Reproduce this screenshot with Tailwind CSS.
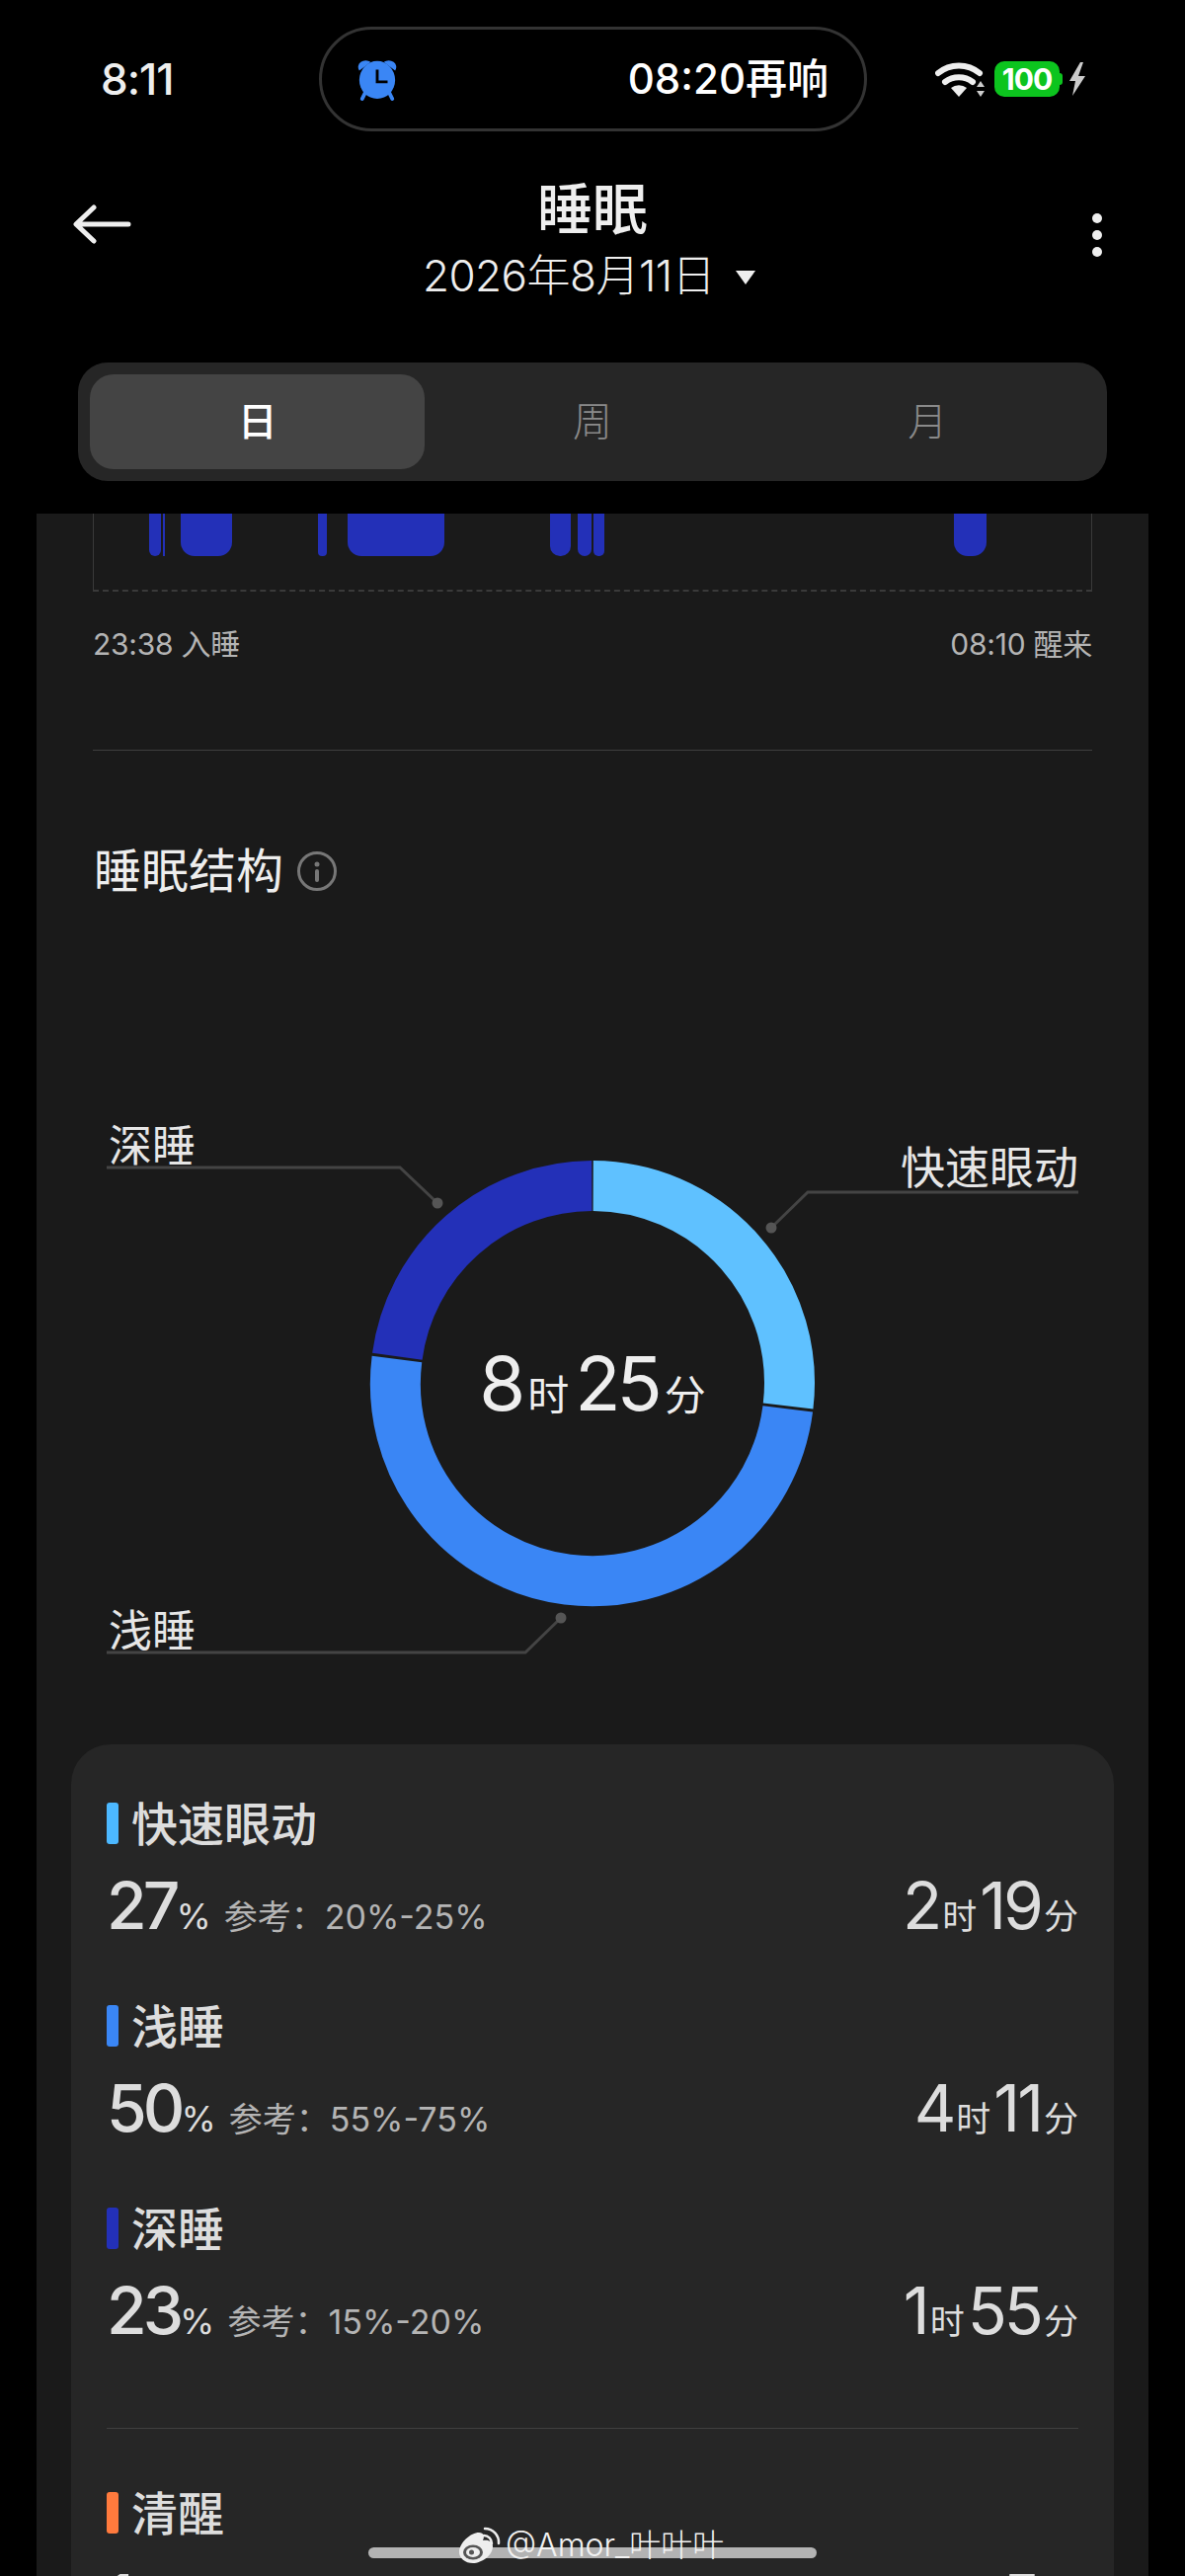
<!DOCTYPE html>
<html lang="zh-CN">
<head>
  <meta charset="UTF-8" />
  <meta name="viewport" content="width=device-width, initial-scale=1.0"/>
  <title>睡眠</title>
  <script src="https://cdn.jsdelivr.net/npm/@tailwindcss/browser@4"></script>
</head>
<body class="bg-black">
<div class="relative w-[1200px] h-[2608px] overflow-hidden bg-black font-['Inter','Noto_Sans_CJK_SC',sans-serif]">

  <!-- Header -->
  <header class="h-[520px] pt-[27px]">
    <!-- Status bar -->
    <div class="flex items-center h-[106px] pl-[102px]">
      <div class="w-[221px] text-[44px] leading-none font-medium tracking-[-1px] text-[#eeeeee]">8:11</div>
      <div class="flex items-center justify-between w-[555px] h-[106px] pl-[35px] pr-[36px] rounded-full border-[3px] border-[#333333]">
        <svg class="w-[42px] h-[46px]" viewBox="0 0 44 46">
          <ellipse cx="22" cy="24" rx="19" ry="20" fill="#3a86f5"/>
          <path d="M3 14a8 7 0 0 1 12-9z M41 14a8 7 0 0 0-12-9z" fill="#3a86f5"/>
          <path d="M10 36l-4 8M34 36l4 8" stroke="#3a86f5" stroke-width="4" stroke-linecap="round"/>
          <path d="M22 13v13h11" fill="none" stroke="#000" stroke-width="3"/>
        </svg>
        <div class="text-[42px] leading-none font-medium text-white">08:20再响</div>
      </div>
      <div class="flex items-center ml-[69px]">
        <svg class="w-[52px] h-[38px]" viewBox="0 0 52 38">
          <path d="M3 13a33 33 0 0 1 42 0M10 22a23 23 0 0 1 28 0" fill="none" stroke="#eeeeee" stroke-width="6" stroke-linecap="round"/>
          <path d="M16 28a13 13 0 0 1 16 0l-8 9z" fill="#eeeeee"/>
          <path d="M46 21l4 6h-8z M46 37l4-6h-8z" fill="#cccccc"/>
        </svg>
        <div class="flex items-center justify-center w-[66px] h-[36px] ml-[8px] rounded-[10px] bg-[#0cc41e] text-[30px] leading-none font-bold tracking-[-1px] text-white">100</div>
        <div class="w-[3px] h-[12px] rounded-r-full bg-[#0cc41e]"></div>
        <svg class="w-[18px] h-[34px] ml-[6px]" viewBox="0 0 18 34">
          <path d="M12 0L1 19h6L4 34l13-20h-7l5-14z" fill="#cccccc"/>
        </svg>
      </div>
    </div>

    <!-- Title row -->
    <div class="grid grid-cols-[1fr_auto_1fr] items-start h-[130px] mt-[47px] px-[73px]">
      <svg class="w-[60px] h-[40px] mt-[27px]" viewBox="0 0 60 40">
        <path d="M57 20H5M22 3L4 20l18 17" fill="none" stroke="#eeeeee" stroke-width="5" stroke-linecap="round" stroke-linejoin="round"/>
      </svg>
      <div class="flex flex-col items-center">
        <div class="text-[56px] leading-[64px] font-medium text-[#eeeeee]">睡眠</div>
        <div class="flex items-center mt-[9px] mr-[6px] text-[44px] leading-[52px] font-light tracking-[-0.5px] text-[#eeeeee]">
          2026年8月11日
          <svg class="w-[22px] h-[16px] ml-[20px] mt-[3px]" viewBox="0 0 22 16"><path d="M1 1h20l-10 14z" fill="#eeeeee"/></svg>
        </div>
      </div>
      <div class="flex flex-col gap-[7px] justify-self-end mt-[36px] mr-[11px]">
        <div class="w-[10px] h-[10px] rounded-full bg-[#eeeeee]"></div>
        <div class="w-[10px] h-[10px] rounded-full bg-[#eeeeee]"></div>
        <div class="w-[10px] h-[10px] rounded-full bg-[#eeeeee]"></div>
      </div>
    </div>

    <!-- Day / week / month tabs -->
    <div class="grid grid-cols-3 h-[120px] mx-[79px] mt-[57px] p-[12px] rounded-[30px] bg-[#262626]">
      <div class="flex items-center justify-center rounded-[24px] bg-[#444444] text-[40px] font-medium text-white">日</div>
      <div class="flex items-center justify-center text-[40px] font-light text-[#8a8a8a]">周</div>
      <div class="flex items-center justify-center text-[40px] font-light text-[#8a8a8a]">月</div>
    </div>
  </header>

  <!-- Scrolling panel -->
  <main class="w-[1126px] ml-[37px] bg-[#1a1a1a]">
    <div class="px-[57px]">
      <!-- Sleep stage strip -->
      <div class="relative h-[79px] border-x border-b-2 border-[#3a3a3a] border-b-[#3a3a3a] [border-bottom-style:dashed]">
        <div class="absolute top-0 left-[56px] w-[12px] h-[43px] rounded-b-[6px] bg-[#2330b8]"></div>
        <div class="absolute top-0 left-[70px] w-[2px] h-[43px] bg-[#2330b8]"></div>
        <div class="absolute top-0 left-[88px] w-[52px] h-[43px] rounded-b-[14px] bg-[#2330b8]"></div>
        <div class="absolute top-0 left-[227px] w-[9px] h-[43px] rounded-b-[4px] bg-[#2330b8]"></div>
        <div class="absolute top-0 left-[257px] w-[98px] h-[43px] rounded-b-[14px] bg-[#2330b8]"></div>
        <div class="absolute top-0 left-[462px] w-[21px] h-[43px] rounded-b-[10px] bg-[#2330b8]"></div>
        <div class="absolute top-0 left-[490px] w-[14px] h-[43px] rounded-b-[7px] bg-[#2330b8]"></div>
        <div class="absolute top-0 left-[506px] w-[11px] h-[43px] rounded-b-[5px] bg-[#2330b8]"></div>
        <div class="absolute top-0 left-[871px] w-[33px] h-[43px] rounded-b-[14px] bg-[#2330b8]"></div>
      </div>
      <div class="flex justify-between mt-[37px] text-[30px] leading-[32px] tracking-[-0.25px] text-[#b4b4b4]">
        <span>23:38 入睡</span>
        <span>08:10 醒来</span>
      </div>
      <div class="h-[1px] mt-[91px] bg-[#3f3f3f]"></div>

      <!-- Sleep structure heading -->
      <div class="flex items-center gap-[13px] mt-[95px] h-[54px] pl-[1px]">
        <h2 class="text-[48px] leading-none text-[#eeeeee]">睡眠结构</h2>
        <svg class="w-[42px] h-[42px]" viewBox="0 0 42 42">
          <circle cx="21" cy="21" r="18.5" fill="none" stroke="#777777" stroke-width="3"/>
          <circle cx="21" cy="14" r="2.5" fill="#777777"/>
          <path d="M21 21v9" stroke="#777777" stroke-width="4" stroke-linecap="round"/>
        </svg>
      </div>
    </div>

    <!-- Donut diagram -->
    <div class="relative h-[600px] mt-[191px]">
      <svg class="absolute top-0 left-0 w-[1126px] h-[600px]" viewBox="0 0 1126 600">
        <g fill="none" stroke-width="51">
          <path d="M563.7 100.5A199.5 199.5 0 0 1 761.1 323.6" stroke="#5fc1ff"/>
          <path d="M760.75 326.4A199.5 199.5 0 0 1 364.94 276.03" stroke="#3a86f5"/>
          <path d="M365.3 273.27A199.5 199.5 0 0 1 562.3 100.5" stroke="#2330b8"/>
        </g>
        <g fill="none" stroke="#444444" stroke-width="3">
          <path d="M71 82H368L406 118"/>
          <path d="M744 143L781 107H1055"/>
          <path d="M531 538L495 573H71"/>
        </g>
        <g fill="#555555">
          <circle cx="406" cy="118" r="5.5"/>
          <circle cx="744" cy="143" r="5.5"/>
          <circle cx="531" cy="538" r="5.5"/>
        </g>
      </svg>
      <div class="absolute top-[38px] left-[73px] text-[44px] leading-[44px] text-[#e6e6e6]">深睡</div>
      <div class="absolute top-[61px] right-[71px] text-[45px] leading-[44px] text-[#e6e6e6]">快速眼动</div>
      <div class="absolute top-[529px] left-[73px] text-[44px] leading-[44px] text-[#e6e6e6]">浅睡</div>
      <div class="absolute top-[258px] left-0 w-[1126px] flex items-baseline justify-center gap-[6px] text-[#eeeeee]">
        <span class="text-[76px] leading-[84px] tracking-[-4px]">8</span>
        <span class="text-[42px]">时</span>
        <span class="text-[76px] leading-[84px] tracking-[-4px]">25</span>
        <span class="text-[42px]">分</span>
      </div>
    </div>

    <!-- Breakdown card -->
    <section class="w-[1056px] ml-[35px] mt-[66px] pt-[59px] px-[36px] rounded-t-[40px] bg-[#262626]">
      <div class="h-[205px]">
        <div class="flex items-center gap-[13px] h-[42px]">
          <div class="w-[12px] h-[42px] rounded-[3px] bg-[#4cb8ff]"></div>
          <div class="text-[47px] leading-none font-medium text-[#dddddd]">快速眼动</div>
        </div>
        <div class="flex items-baseline justify-between mt-[28px] text-[#dddddd]">
          <div class="flex items-baseline">
            <span class="text-[66px] leading-[68px] font-medium tracking-[-4px]">27</span>
            <span class="text-[36px]">%</span>
            <span class="text-[34px] text-[#b4b4b4] ml-[13px]">参考：20%-25%</span>
          </div>
          <div class="flex items-baseline gap-[3px]">
            <span class="text-[66px] leading-[68px] tracking-[-3px]">2</span>
            <span class="text-[35px]">时</span>
            <span class="text-[66px] leading-[68px] tracking-[-3px]">19</span>
            <span class="text-[35px]">分</span>
          </div>
        </div>
      </div>
      <div class="h-[205px]">
        <div class="flex items-center gap-[13px] h-[42px]">
          <div class="w-[12px] h-[42px] rounded-[3px] bg-[#3a86f5]"></div>
          <div class="text-[47px] leading-none font-medium text-[#dddddd]">浅睡</div>
        </div>
        <div class="flex items-baseline justify-between mt-[28px] text-[#dddddd]">
          <div class="flex items-baseline">
            <span class="text-[66px] leading-[68px] font-medium tracking-[-4px]">50</span>
            <span class="text-[36px]">%</span>
            <span class="text-[34px] text-[#b4b4b4] ml-[13px]">参考：55%-75%</span>
          </div>
          <div class="flex items-baseline gap-[3px]">
            <span class="text-[66px] leading-[68px] tracking-[-3px]">4</span>
            <span class="text-[35px]">时</span>
            <span class="text-[66px] leading-[68px] tracking-[-3px]">11</span>
            <span class="text-[35px]">分</span>
          </div>
        </div>
      </div>
      <div class="h-[223px]">
        <div class="flex items-center gap-[13px] h-[42px]">
          <div class="w-[12px] h-[42px] rounded-[3px] bg-[#2330b8]"></div>
          <div class="text-[47px] leading-none font-medium text-[#dddddd]">深睡</div>
        </div>
        <div class="flex items-baseline justify-between mt-[28px] text-[#dddddd]">
          <div class="flex items-baseline">
            <span class="text-[66px] leading-[68px] font-medium tracking-[-4px]">23</span>
            <span class="text-[36px]">%</span>
            <span class="text-[34px] text-[#b4b4b4] ml-[13px]">参考：15%-20%</span>
          </div>
          <div class="flex items-baseline gap-[3px]">
            <span class="text-[66px] leading-[68px] tracking-[-3px]">1</span>
            <span class="text-[35px]">时</span>
            <span class="text-[66px] leading-[68px] tracking-[-3px]">55</span>
            <span class="text-[35px]">分</span>
          </div>
        </div>
      </div>
      <div class="h-[1px] bg-[#3f3f3f]"></div>
      <div class="mt-[64px]">
        <div class="flex items-center gap-[13px] h-[42px]">
          <div class="w-[12px] h-[42px] rounded-[3px] bg-[#ff7a3d]"></div>
          <div class="text-[47px] leading-none font-medium text-[#dddddd]">清醒</div>
        </div>
        <div class="flex items-baseline justify-between mt-[31px] text-[#dddddd]">
          <span class="text-[66px] leading-[68px] font-medium">1</span>
          <div class="flex items-baseline gap-[3px]">
            <span class="text-[66px] leading-[68px]">5</span>
            <span class="text-[35px]">分</span>
          </div>
        </div>
      </div>
    </section>
  </main>

  <!-- Home indicator -->
  <div class="absolute top-[2579px] left-[373px] w-[454px] h-[11px] rounded-full bg-[#b3b3b3]"></div>

  <!-- Weibo watermark -->
  <div class="absolute top-[2557px] left-[463px] flex items-center gap-[5px] text-[#f2f2f2]">
    <svg class="w-[44px] h-[40px]" viewBox="0 0 44 40">
      <path d="M2 27C2 17 14 7 22 7c5 0 6 4 4 8 6-1 10 1 10 6 0 9-11 17-20 17C8 38 2 33 2 27z" fill="#eeeeee"/>
      <ellipse cx="16" cy="27" rx="10" ry="7.5" fill="#555555"/>
      <ellipse cx="16" cy="27" rx="7" ry="5" fill="#eeeeee"/>
      <circle cx="14.500" cy="27" r="2.500" fill="#555555"/>
      <path d="M27 10a8 8 0 0 1 8 8M28 3a14 14 0 0 1 14 15" fill="none" stroke="#eeeeee" stroke-width="2.500" stroke-linecap="round"/>
    </svg>
    <span class="text-[32px] leading-[40px] font-light">@Amor_叶叶叶</span>
  </div>
</div>
</body>
</html>
